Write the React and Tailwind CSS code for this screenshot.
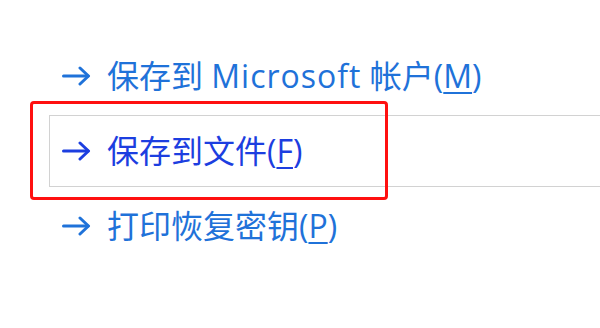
import React from 'react';

const font = { fontFamily: '"Open Sans", "Noto Sans CJK SC", sans-serif' };

function Arrow({ color }) {
  return (
    <svg width="29" height="20" viewBox="0 0 29 20" fill="none" className="shrink-0">
      <path d="M1.5 10H26" stroke={color} strokeWidth="3" strokeLinecap="round" />
      <path d="M18 2L26.5 10L18 18" stroke={color} strokeWidth="3" strokeLinecap="round" strokeLinejoin="round" />
    </svg>
  );
}

function Option({ color, label, mnemonic }) {
  return (
    <div className="flex items-center h-[40px] gap-[16px]">
      <Arrow color={color} />
      <span className="text-[32px] leading-none whitespace-nowrap" style={{ color }}>
        {label}(<span className="underline underline-offset-[4px] decoration-[2px]">{mnemonic}</span>)
      </span>
    </div>
  );
}

export default function App() {
  return (
    <div className="relative w-[600px] h-[328px] bg-white overflow-hidden" style={font}>
      <div className="flex flex-col pt-[56px]">
        <div className="pl-[62px]">
          <Option
            color="#1f72d9"
            label={<>保存到 <span className="tracking-[1px]">Microsoft</span> 帐户</>}
            mnemonic="M"
          />
        </div>
        <div className="mt-[19px] ml-[49px] h-[72px] border border-r-0 border-[#d2d2d2] flex items-center pl-[12px]">
          <Option color="#1c3ee0" label="保存到文件" mnemonic="F" />
        </div>
        <div className="mt-[19px] pl-[62px]">
          <Option color="#1f72d9" label="打印恢复密钥" mnemonic="P" />
        </div>
      </div>
      <div className="absolute left-[30px] top-[101px] w-[358px] h-[99px] border-[3px] border-[#ff1010] rounded-[4px]" />
    </div>
  );
}
